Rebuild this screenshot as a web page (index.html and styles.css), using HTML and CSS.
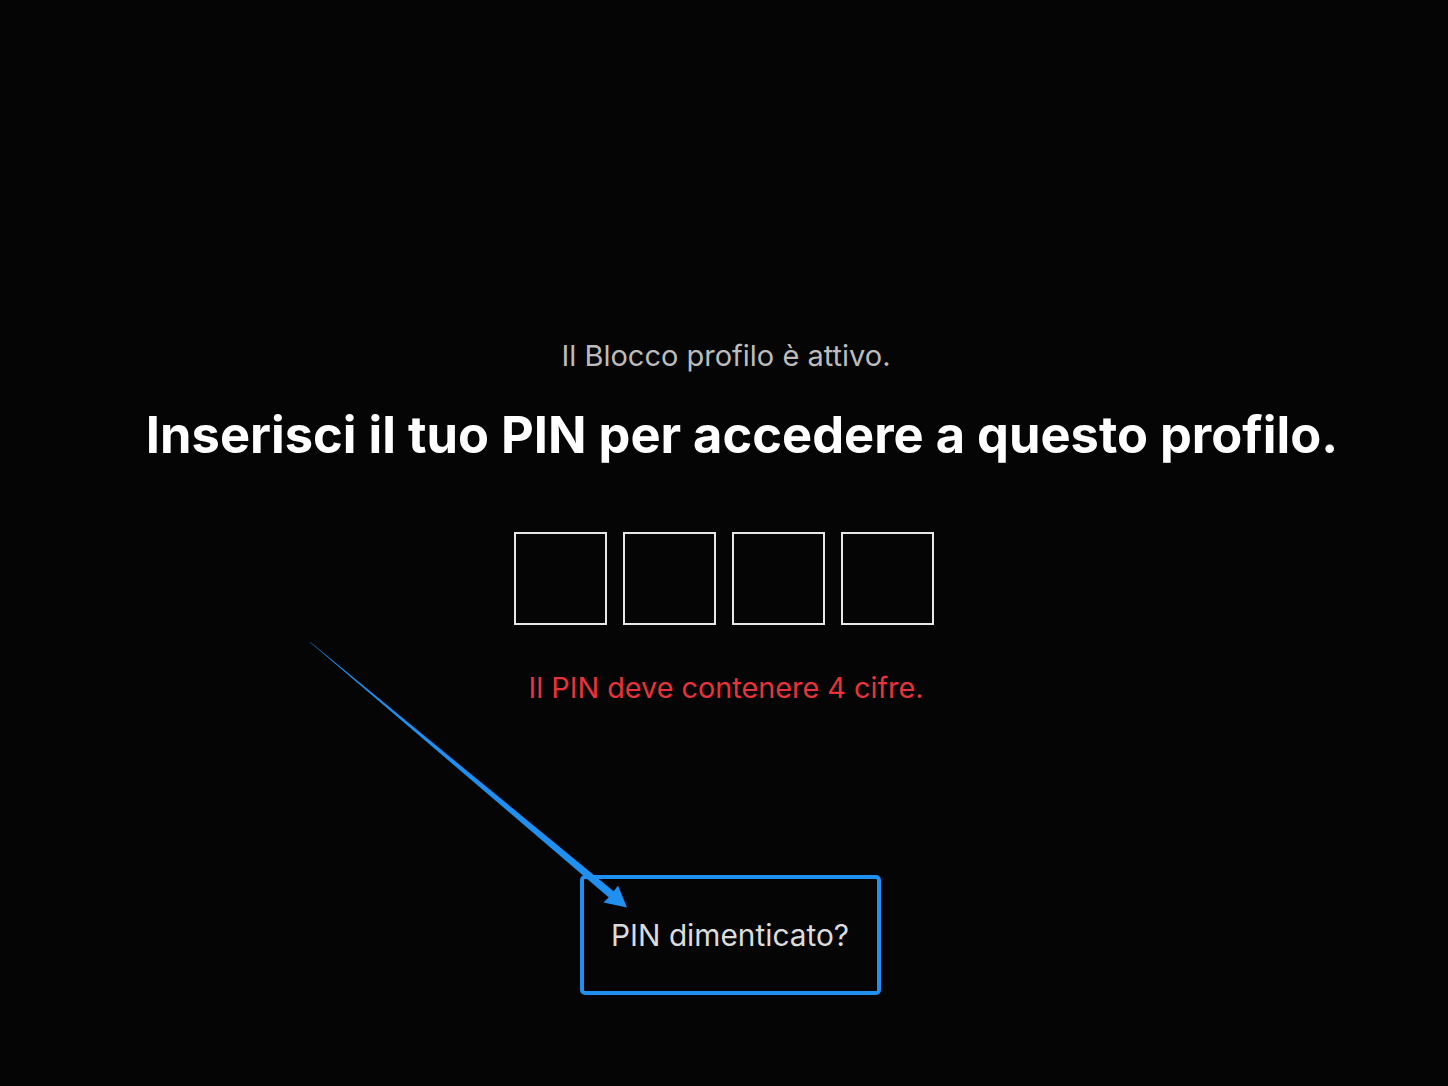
FILE: index.html
```html
<!DOCTYPE html>
<html lang="it">
<head>
<meta charset="utf-8">
<title>Blocco profilo</title>
<link rel="stylesheet" href="styles.css">
</head>
<body>
<main class="lock">
  <p class="lock-status">Il Blocco profilo è attivo.</p>
  <h1 class="lock-title">Inserisci il tuo PIN per accedere a questo profilo.</h1>
  <div class="pin-inputs">
    <input class="pin-box" type="password" maxlength="1" aria-label="Cifra 1">
    <input class="pin-box" type="password" maxlength="1" aria-label="Cifra 2">
    <input class="pin-box" type="password" maxlength="1" aria-label="Cifra 3">
    <input class="pin-box" type="password" maxlength="1" aria-label="Cifra 4">
  </div>
  <p class="pin-error">Il PIN deve contenere 4 cifre.</p>
  <button class="forgot" type="button">PIN dimenticato?</button>
</main>
<svg class="pointer" width="1448" height="1086" viewBox="0 0 1448 1086" aria-hidden="true">
  <!-- tapered shaft -->
  <polygon points="309.7,641.9 310.3,642.1 615.2,892.5 610.0,898.5" fill="#1f8ff0"/>
  <!-- head -->
  <polygon points="627,907.5 603.5,902.5 611,895 618,885.5" fill="#1f8ff0"/>
</svg>
</body>
</html>
```
FILE: styles.css
```css
html, body {
  margin: 0;
  padding: 0;
}

body {
  background: #050505;
  width: 1448px;
  height: 1086px;
  overflow: hidden;
  position: relative;
  font-family: Inter, "Noto Sans", "Liberation Sans", sans-serif;
}

.lock {
  display: flex;
  flex-direction: column;
  align-items: center;
  padding-top: 339px;
}

.lock-status {
  margin: 0;
  font-size: 29px;
  line-height: 34px;
  color: #bcbcbc;
  padding-left: 4px;
}

.lock-title {
  margin: 27px 0 0;
  font-size: 50.6px;
  line-height: 70px;
  font-weight: 700;
  color: #ffffff;
  white-space: nowrap;
  padding-left: 36px;
}

.pin-inputs {
  display: flex;
  gap: 16px;
  margin-top: 62px;
}

.pin-box {
  box-sizing: border-box;
  width: 93px;
  height: 93px;
  margin: 0;
  padding: 0;
  background: transparent;
  border: 2px solid #e8e8e8;
  border-radius: 0;
  outline: none;
}

.pin-error {
  margin: 46px 0 0;
  font-size: 28.8px;
  line-height: 34px;
  color: #e6343a;
  padding-left: 4px;
}

.forgot {
  box-sizing: border-box;
  margin-top: 170px;
  margin-left: 12px;
  width: 301px;
  height: 120px;
  background: transparent;
  border: 4px solid #1f8ff0;
  border-radius: 5px;
  color: #dcdcdc;
  font-family: inherit;
  font-size: 29.8px;
  padding: 0;
  cursor: pointer;
}

.pointer {
  position: absolute;
  left: 0;
  top: 0;
  pointer-events: none;
}
```
